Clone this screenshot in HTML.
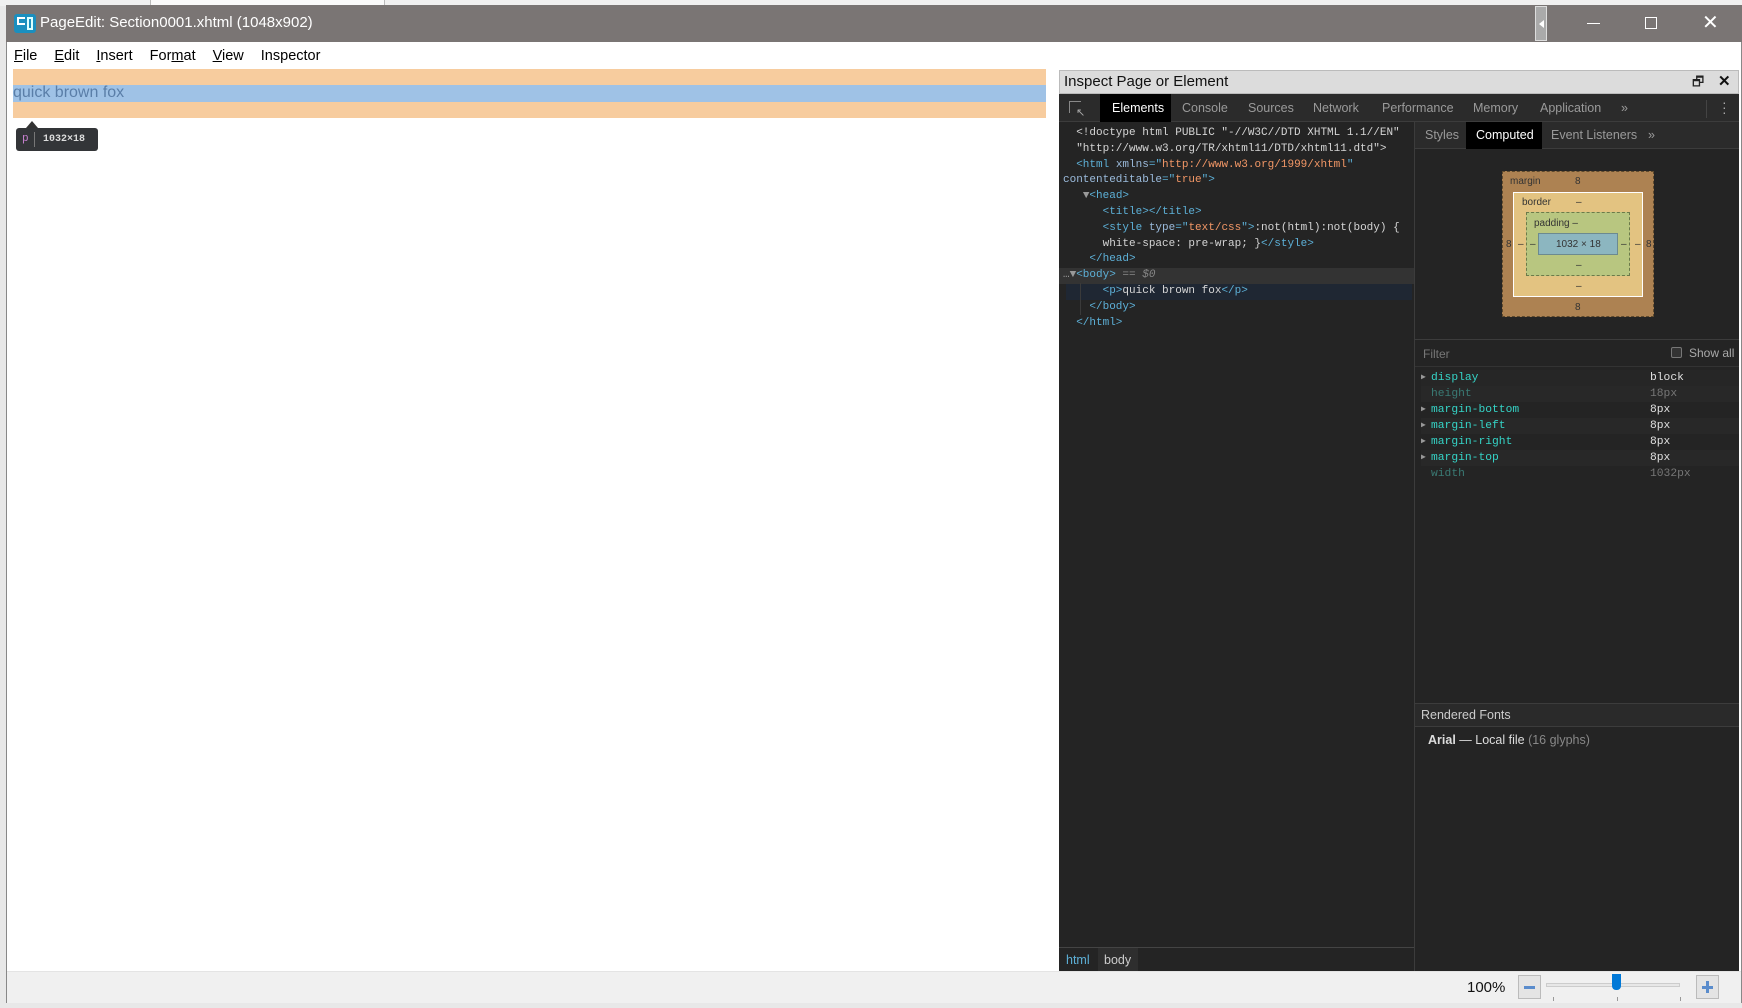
<!DOCTYPE html>
<html><head><meta charset="utf-8"><style>
*{margin:0;padding:0;box-sizing:border-box}
body{width:1742px;height:1008px;background:#e8e8e8;position:relative;overflow:hidden;font-family:"Liberation Sans",sans-serif}
.a{position:absolute;white-space:nowrap}
.mono{font-family:"Liberation Mono",monospace}
.t{color:#5db0d7}.an{color:#9bbbdc}.av{color:#f29766}.tx{color:#d5d5d5}
.row{height:16px;line-height:16px;position:relative}
</style></head><body>
<div class="a" style="left:0;top:0;width:1742px;height:6px;background:#f0f0f0"></div>
<div class="a" style="left:150px;top:0;width:235px;height:6px;background:#fafafa;border-left:1px solid #bbb;border-right:1px solid #bbb"></div>
<div class="a" style="left:6px;top:5px;width:1736px;height:998px;background:#fff;border:1px solid #888"></div>
<div class="a" style="left:6px;top:5px;width:1736px;height:37px;background:#7a7574"></div>
<div class="a" style="left:14px;top:14px;width:22px;height:19px;background:#1a8fbf;border-radius:3px"></div>
<div class="a" style="left:17px;top:17px;width:8px;height:8px;border:2px solid #fff;border-right:none"></div>
<div class="a" style="left:27px;top:17px;width:6px;height:13px;border:2px solid #dff;"></div>
<div class="a" style="left:40px;top:14px;color:#fff;font-size:15px">PageEdit: Section0001.xhtml (1048x902)</div>
<div class="a" style="left:1535px;top:6px;width:12px;height:35px;background:#aaa;border:1px solid #ddd"></div>
<div class="a" style="left:1539px;top:20px;width:0;height:0;border-top:4px solid transparent;border-bottom:4px solid transparent;border-right:5px solid #fff"></div>
<div class="a" style="left:1587px;top:23px;width:13px;height:1px;background:#fff"></div>
<div class="a" style="left:1645px;top:17px;width:12px;height:12px;border:1px solid #fff"></div>
<div class="a" style="left:1702px;top:12px;color:#fff;font-size:20px;line-height:22px">✕</div>
<div class="a" style="left:14px;top:48px;font-size:14.5px;color:#000">
<span><u>F</u>ile</span><span style="margin-left:17px"><u>E</u>dit</span><span style="margin-left:17px"><u>I</u>nsert</span><span style="margin-left:17px">For<u>m</u>at</span><span style="margin-left:17px"><u>V</u>iew</span><span style="margin-left:17px">Inspector</span></div>
<div class="a" style="left:13px;top:69px;width:1033px;height:49px;background:#f7cc9e"></div>
<div class="a" style="left:13px;top:85px;width:1033px;height:17px;background:#9fc2e6"></div>
<div class="a" style="left:13px;top:84px;font-size:16px;color:#5a7ea8">quick brown fox</div>
<div class="a" style="left:26px;top:121px;width:0;height:0;border-left:6px solid transparent;border-right:6px solid transparent;border-bottom:7px solid #333"></div>
<div class="a" style="left:16px;top:128px;width:82px;height:23px;background:#333538;border-radius:3px"></div>
<div class="a mono" style="left:22px;top:133px;font-size:11px;color:#c880d0">p</div>
<div class="a" style="left:34px;top:132px;width:1px;height:15px;background:#777"></div>
<div class="a mono" style="left:43px;top:134px;font-size:10px;color:#ddd;font-weight:bold">1032×18</div>
<div class="a" style="left:1059px;top:70px;width:680px;height:24px;background:#dcdcdc;border:1px solid #bbb"></div>
<div class="a" style="left:1064px;top:73px;font-size:15px;color:#111">Inspect Page or Element</div>
<div class="a" style="left:1692px;top:73px;font-size:13px;color:#222">🗗</div>
<div class="a" style="left:1718px;top:72px;font-size:15px;color:#111;font-weight:bold">✕</div>
<div class="a" style="left:1059px;top:94px;width:680px;height:877px;background:#242424"></div>
<div class="a" style="left:1059px;top:94px;width:680px;height:28px;background:#2b2b2b;border-bottom:1px solid #3c3c3c"></div>
<div class="a" style="left:1069px;top:101px;width:12px;height:12px;border:1px solid #888;border-right:none;border-bottom:none"></div>
<div class="a" style="left:1076px;top:106px;font-size:11px;color:#aaa">↖</div>
<div class="a" style="left:1100px;top:94px;width:71px;height:28px;background:#000"></div>
<div class="a" style="top:101px;left:0;font-size:12.5px;color:#9a9a9a;width:1742px">
<span class="a" style="left:1112px;color:#fff">Elements</span><span class="a" style="left:1182px">Console</span><span class="a" style="left:1248px">Sources</span><span class="a" style="left:1313px">Network</span><span class="a" style="left:1382px">Performance</span><span class="a" style="left:1473px">Memory</span><span class="a" style="left:1540px">Application</span><span class="a" style="left:1621px">»</span></div>
<div class="a" style="left:1706px;top:100px;width:1px;height:18px;background:#444"></div>
<div class="a" style="left:1722px;top:100px;color:#aaa;font-size:14px;line-height:5px">·<br>·<br>·</div>
<div class="a" style="left:1414px;top:122px;width:1px;height:849px;background:#3c3c3c"></div>
<div class="a" style="left:1059px;top:268px;width:355px;height:16px;background:#333"></div>
<div class="a" style="left:1066px;top:284px;width:346px;height:16px;background:#1f2733"></div>
<div class="a" style="left:1080px;top:283px;width:1px;height:32px;background:#3a3a3a"></div>
<div class="a mono" style="left:1063px;top:126px;font-size:11px;line-height:15.8px;white-space:pre;color:#d5d5d5"><span class="tx">  &lt;!doctype html PUBLIC "-//W3C//DTD XHTML 1.1//EN"</span>
<span class="tx">  "http://www.w3.org/TR/xhtml11/DTD/xhtml11.dtd"&gt;</span>
  <span class="t">&lt;html</span> <span class="an">xmlns</span><span class="t">="</span><span class="av">http://www.w3.org/1999/xhtml</span><span class="t">"</span>
<span class="an">contenteditable</span><span class="t">="</span><span class="av">true</span><span class="t">"&gt;</span>
   <span style="color:#999">▼</span><span class="t">&lt;head&gt;</span>
      <span class="t">&lt;title&gt;&lt;/title&gt;</span>
      <span class="t">&lt;style</span> <span class="an">type</span><span class="t">="</span><span class="av">text/css</span><span class="t">"&gt;</span>:not(html):not(body) {
      white-space: pre-wrap; }<span class="t">&lt;/style&gt;</span>
    <span class="t">&lt;/head&gt;</span>
<span style="color:#999">…▼</span><span class="t">&lt;body&gt;</span> <span style="color:#888;font-style:italic">== $0</span>
      <span class="t">&lt;p&gt;</span>quick brown fox<span class="t">&lt;/p&gt;</span>
    <span class="t">&lt;/body&gt;</span>
  <span class="t">&lt;/html&gt;</span></div>
<div class="a" style="left:1059px;top:947px;width:355px;height:1px;background:#444"></div>
<div class="a" style="left:1098px;top:948px;width:40px;height:23px;background:#2e2e2e"></div>
<div class="a" style="left:1066px;top:953px;font-size:12.5px;color:#5db0d7">html</div>
<div class="a" style="left:1104px;top:953px;font-size:12.5px;color:#ccc">body</div>
<div class="a" style="left:1415px;top:122px;width:324px;height:27px;background:#2b2b2b;border-bottom:1px solid #3c3c3c"></div>
<div class="a" style="left:1466px;top:122px;width:76px;height:27px;background:#000"></div>
<div class="a" style="top:128px;font-size:12.5px;color:#9a9a9a;left:0">
<span class="a" style="left:1425px">Styles</span><span class="a" style="left:1476px;color:#fff">Computed</span><span class="a" style="left:1551px">Event Listeners</span><span class="a" style="left:1648px">»</span></div>
<div class="a" style="left:1502px;top:171px;width:152px;height:146px;background:#ad8252;border:1px dashed #5e4a2e"></div>
<div class="a" style="left:1513px;top:192px;width:130px;height:105px;background:#e3c381;border:1px solid #fff"></div>
<div class="a" style="left:1526px;top:212px;width:104px;height:64px;background:#b8c680;border:1px dashed #6b7a4a"></div>
<div class="a" style="left:1538px;top:233px;width:80px;height:22px;background:#8cb6c0;border:1px solid #6c8a90"></div>
<div class="a" style="left:0;top:0;font-size:10px;color:#333">
<span class="a" style="left:1510px;top:176px">margin</span><span class="a" style="left:1575px;top:176px">8</span>
<span class="a" style="left:1522px;top:197px">border</span><span class="a" style="left:1576px;top:197px">–</span>
<span class="a" style="left:1534px;top:218px">padding –</span>
<span class="a" style="left:1556px;top:239px">1032 × 18</span>
<span class="a" style="left:1506px;top:239px">8</span><span class="a" style="left:1518px;top:239px">–</span><span class="a" style="left:1530px;top:239px">–</span>
<span class="a" style="left:1621px;top:239px">–</span><span class="a" style="left:1635px;top:239px">–</span><span class="a" style="left:1646px;top:239px">8</span>
<span class="a" style="left:1576px;top:260px">–</span><span class="a" style="left:1576px;top:281px">–</span><span class="a" style="left:1575px;top:302px">8</span></div>
<div class="a" style="left:1415px;top:339px;width:324px;height:1px;background:#3c3c3c"></div>
<div class="a" style="left:1423px;top:347px;font-size:12px;color:#777">Filter</div>
<div class="a" style="left:1671px;top:347px;width:11px;height:11px;border:1px solid #777;border-radius:2px;background:#333"></div>
<div class="a" style="left:1689px;top:346px;font-size:12px;color:#aaa">Show all</div>
<div class="a" style="left:1415px;top:366px;width:324px;height:1px;background:#333"></div>
<div class="a mono" style="left:1421px;top:370px;font-size:11.3px;width:318px">
<div class="row" style="background:#262626"><span class="a" style="left:0;color:#999;font-size:8px">▶</span><span class="a" style="left:10px;color:#35d4c7">display</span><span class="a" style="left:229px;color:#e0e0e0">block</span></div>
<div class="row" style="background:#282828"><span class="a" style="left:10px;color:#3a7a74">height</span><span class="a" style="left:229px;color:#777">18px</span></div>
<div class="row"><span class="a" style="left:0;color:#999;font-size:8px">▶</span><span class="a" style="left:10px;color:#35d4c7">margin-bottom</span><span class="a" style="left:229px;color:#e0e0e0">8px</span></div>
<div class="row" style="background:#282828"><span class="a" style="left:0;color:#999;font-size:8px">▶</span><span class="a" style="left:10px;color:#35d4c7">margin-left</span><span class="a" style="left:229px;color:#e0e0e0">8px</span></div>
<div class="row"><span class="a" style="left:0;color:#999;font-size:8px">▶</span><span class="a" style="left:10px;color:#35d4c7">margin-right</span><span class="a" style="left:229px;color:#e0e0e0">8px</span></div>
<div class="row" style="background:#282828"><span class="a" style="left:0;color:#999;font-size:8px">▶</span><span class="a" style="left:10px;color:#35d4c7">margin-top</span><span class="a" style="left:229px;color:#e0e0e0">8px</span></div>
<div class="row"><span class="a" style="left:10px;color:#3a7a74">width</span><span class="a" style="left:229px;color:#777">1032px</span></div>
</div>
<div class="a" style="left:1415px;top:703px;width:324px;height:24px;background:#2a2a2a;border-top:1px solid #3c3c3c;border-bottom:1px solid #3c3c3c"></div>
<div class="a" style="left:1421px;top:708px;font-size:12.5px;color:#ccc">Rendered Fonts</div>
<div class="a" style="left:1428px;top:733px;font-size:12.5px;color:#ddd"><b>Arial</b> — Local file <span style="color:#888">(16 glyphs)</span></div>
<div class="a" style="left:7px;top:971px;width:1734px;height:32px;background:#f0f0f0;border-top:1px solid #e4e4e4"></div>
<div class="a" style="left:1467px;top:979px;font-size:15px;color:#111">100%</div>
<div class="a" style="left:1518px;top:975px;width:23px;height:24px;border:1px solid #bbb;background:#e4e4e4"></div>
<div class="a" style="left:1524px;top:986px;width:11px;height:3px;background:#5a8ccc"></div>
<div class="a" style="left:1546px;top:983px;width:134px;height:4px;background:#e7e7e7;border:1px solid #ccc"></div>
<div class="a" style="left:1612px;top:974px;width:9px;height:16px;background:#0078d7;border-radius:0 0 4px 4px"></div>
<div class="a" style="left:1553px;top:997px;width:1px;height:4px;background:#999"></div>
<div class="a" style="left:1617px;top:997px;width:1px;height:4px;background:#999"></div>
<div class="a" style="left:1680px;top:997px;width:1px;height:4px;background:#999"></div>
<div class="a" style="left:1696px;top:975px;width:23px;height:24px;border:1px solid #bbb;background:#e4e4e4"></div>
<div class="a" style="left:1702px;top:986px;width:11px;height:3px;background:#5a8ccc"></div>
<div class="a" style="left:1706px;top:981px;width:3px;height:12px;background:#5a8ccc"></div>
</body></html>
